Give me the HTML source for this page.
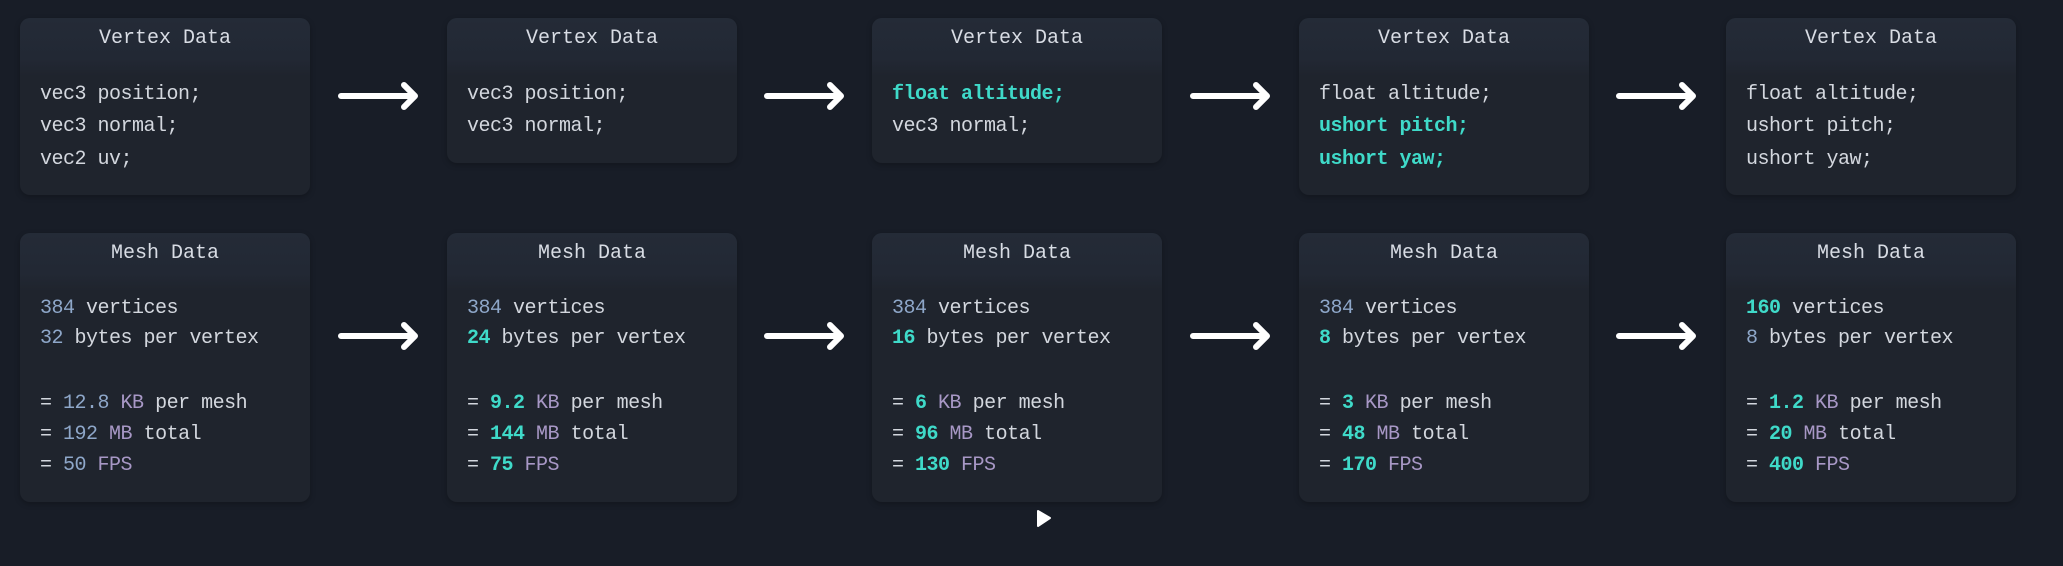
<!DOCTYPE html>
<html><head><meta charset="utf-8"><style>
body{margin:0;width:2063px;height:566px;background:#181d27;overflow:hidden;position:relative;font-family:"Liberation Mono",monospace;font-size:20px;color:#d3d7de}
.b{position:absolute;width:290px;background:#1f242d;border-radius:10px;box-shadow:0 2px 6px rgba(0,0,0,.25);overflow:hidden}
.h{height:58px;background:linear-gradient(#242b37,#222834 70%,#1f242d);text-align:center;line-height:40px;color:#d8dce4;box-sizing:border-box;padding-top:1px;margin-bottom:-14px}
.l{position:absolute;left:20px;white-space:pre;line-height:24px;letter-spacing:-0.5px}
.n{color:#8ea7c9}.c{color:#3fdac9;font-weight:bold}.u{color:#a898c6}.cc{color:#3fdac9;font-weight:bold}
</style></head><body>

<div class="b" style="left:20px;top:18px;height:177px"><div class="h">Vertex Data</div>
<div class="l" style="top:65px">vec3 position;</div><div class="l" style="top:97px">vec3 normal;</div><div class="l" style="top:130px">vec2 uv;</div></div>
<div class="b" style="left:447px;top:18px;height:145px"><div class="h">Vertex Data</div>
<div class="l" style="top:65px">vec3 position;</div><div class="l" style="top:97px">vec3 normal;</div></div>
<div class="b" style="left:872px;top:18px;height:145px"><div class="h">Vertex Data</div>
<div class="l cc" style="top:65px">float altitude;</div><div class="l" style="top:97px">vec3 normal;</div></div>
<div class="b" style="left:1299px;top:18px;height:177px"><div class="h">Vertex Data</div>
<div class="l" style="top:65px">float altitude;</div><div class="l cc" style="top:97px">ushort pitch;</div><div class="l cc" style="top:130px">ushort yaw;</div></div>
<div class="b" style="left:1726px;top:18px;height:177px"><div class="h">Vertex Data</div>
<div class="l" style="top:65px">float altitude;</div><div class="l" style="top:97px">ushort pitch;</div><div class="l" style="top:130px">ushort yaw;</div></div>

<div class="b" style="left:20px;top:233px;height:269px"><div class="h">Mesh Data</div>
<div class="l" style="top:64px"><span class="n">384</span> vertices</div>
<div class="l" style="top:94px"><span class="n">32</span> bytes per vertex</div>
<div class="l" style="top:159px">= <span class="n">12.8</span> <span class="u">KB</span> per mesh</div>
<div class="l" style="top:190px">= <span class="n">192</span> <span class="u">MB</span> total</div>
<div class="l" style="top:221px">= <span class="n">50</span> <span class="u">FPS</span></div></div>

<div class="b" style="left:447px;top:233px;height:269px"><div class="h">Mesh Data</div>
<div class="l" style="top:64px"><span class="n">384</span> vertices</div>
<div class="l" style="top:94px"><span class="c">24</span> bytes per vertex</div>
<div class="l" style="top:159px">= <span class="c">9.2</span> <span class="u">KB</span> per mesh</div>
<div class="l" style="top:190px">= <span class="c">144</span> <span class="u">MB</span> total</div>
<div class="l" style="top:221px">= <span class="c">75</span> <span class="u">FPS</span></div></div>

<div class="b" style="left:872px;top:233px;height:269px"><div class="h">Mesh Data</div>
<div class="l" style="top:64px"><span class="n">384</span> vertices</div>
<div class="l" style="top:94px"><span class="c">16</span> bytes per vertex</div>
<div class="l" style="top:159px">= <span class="c">6</span> <span class="u">KB</span> per mesh</div>
<div class="l" style="top:190px">= <span class="c">96</span> <span class="u">MB</span> total</div>
<div class="l" style="top:221px">= <span class="c">130</span> <span class="u">FPS</span></div></div>

<div class="b" style="left:1299px;top:233px;height:269px"><div class="h">Mesh Data</div>
<div class="l" style="top:64px"><span class="n">384</span> vertices</div>
<div class="l" style="top:94px"><span class="c">8</span> bytes per vertex</div>
<div class="l" style="top:159px">= <span class="c">3</span> <span class="u">KB</span> per mesh</div>
<div class="l" style="top:190px">= <span class="c">48</span> <span class="u">MB</span> total</div>
<div class="l" style="top:221px">= <span class="c">170</span> <span class="u">FPS</span></div></div>

<div class="b" style="left:1726px;top:233px;height:269px"><div class="h">Mesh Data</div>
<div class="l" style="top:64px"><span class="c">160</span> vertices</div>
<div class="l" style="top:94px"><span class="n">8</span> bytes per vertex</div>
<div class="l" style="top:159px">= <span class="c">1.2</span> <span class="u">KB</span> per mesh</div>
<div class="l" style="top:190px">= <span class="c">20</span> <span class="u">MB</span> total</div>
<div class="l" style="top:221px">= <span class="c">400</span> <span class="u">FPS</span></div></div>

<svg width="2063" height="566" style="position:absolute;left:0;top:0" fill="none" stroke="#fff" stroke-width="6" stroke-linecap="round" stroke-linejoin="round">
<g id="ar"><path d="M341 96H414M404 85L415 96L404 107"/><path d="M341 336H414M404 325L415 336L404 347"/></g>
<use href="#ar" x="426"/><use href="#ar" x="852"/><use href="#ar" x="1278"/>
<path d="M1038 511L1050 518L1038 526Z" fill="#fff" stroke-width="2"/>
</svg>
</body></html>
